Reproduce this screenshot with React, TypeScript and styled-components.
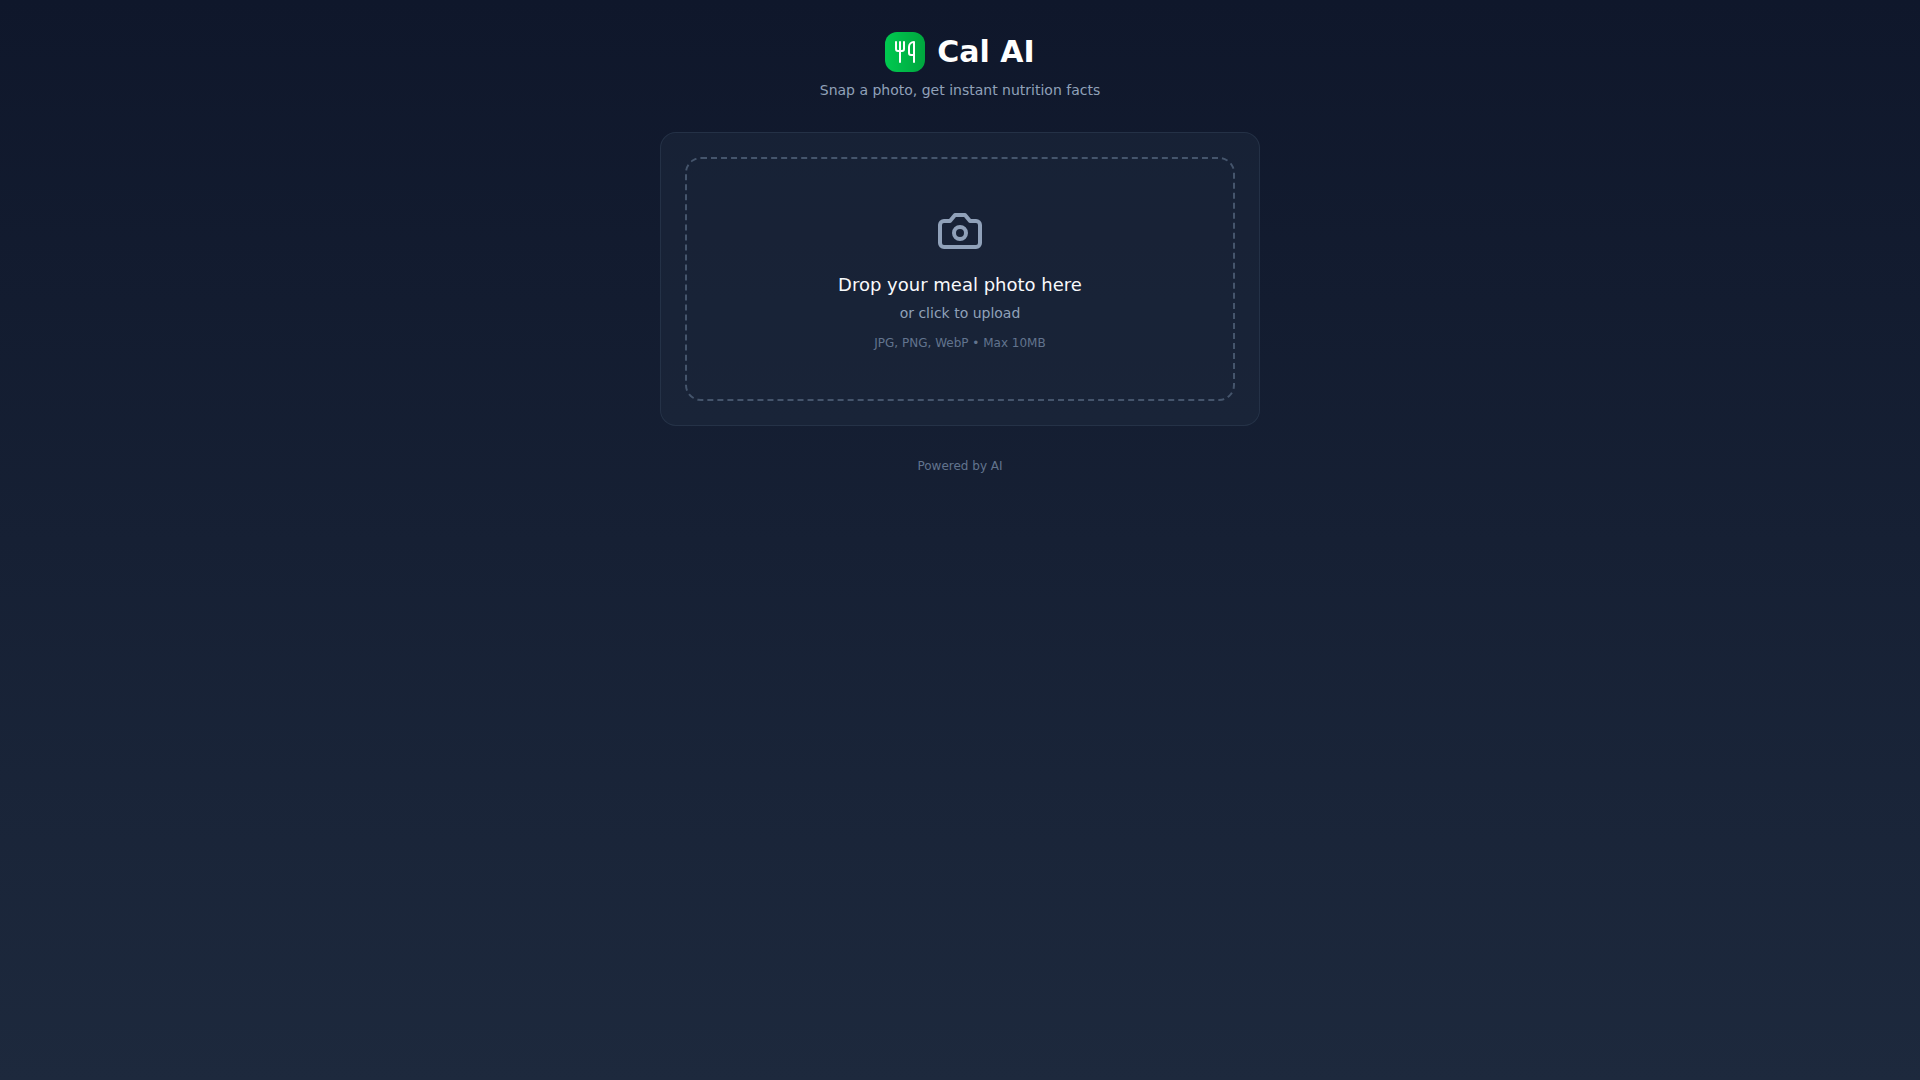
import React from "react";
import styled, { createGlobalStyle } from "styled-components";
import { Utensils } from "lucide-react";

const GlobalStyle = createGlobalStyle`
  *, *::before, *::after { box-sizing: border-box; }
  body {
    margin: 0;
    font-family: "DejaVu Sans", sans-serif;
    color: #ffffff;
  }
  h1, p { margin: 0; }
`;

const Page = styled.div`
  min-height: 100vh;
  background: linear-gradient(to bottom, #0f172b, #1d293d);
  padding: 32px 16px;
`;

const Column = styled.div`
  display: flex;
  flex-direction: column;
  gap: 32px;
  max-width: 600px;
  margin: 0 auto;
`;

const Header = styled.header`
  display: flex;
  flex-direction: column;
  align-items: center;
  gap: 8px;
`;

const Brand = styled.div`
  display: flex;
  align-items: center;
  gap: 12px;
`;

const Logo = styled.div`
  display: flex;
  align-items: center;
  justify-content: center;
  width: 40px;
  height: 40px;
  border-radius: 12px;
  background: linear-gradient(to right, #00c950, #00a63e);
`;

const Title = styled.h1`
  font-size: 30px;
  line-height: 36px;
  font-weight: 700;
`;

const Tagline = styled.p`
  font-size: 14px;
  line-height: 20px;
  color: #90a1b9;
`;

const Card = styled.main`
  padding: 24px;
  border: 1px solid rgba(49, 65, 88, 0.5);
  border-radius: 16px;
  background: rgba(29, 41, 61, 0.5);
`;

const DropZone = styled.label`
  display: flex;
  flex-direction: column;
  align-items: center;
  padding: 48px;
  border: 2px dashed #45556c;
  border-radius: 16px;
  color: #90a1b9;
  cursor: pointer;
`;

const FileInput = styled.input`
  display: none;
`;

const CameraSvg = styled.svg`
  width: 48px;
  height: 48px;
  fill: none;
  stroke: currentColor;
  stroke-width: 2;
  stroke-linecap: round;
  stroke-linejoin: round;
`;

const DropTitle = styled.span`
  margin: 16px 0 4px;
  font-size: 18px;
  line-height: 28px;
  color: #f8fafc;
`;

const DropHint = styled.span`
  font-size: 14px;
  line-height: 20px;
`;

const Note = styled.span`
  font-size: 12px;
  line-height: 16px;
  color: #62748e;
`;

const Formats = styled(Note)`
  margin-top: 12px;
`;

const Footer = styled.footer`
  display: flex;
  justify-content: center;
`;

function CameraIcon() {
  return (
    <CameraSvg viewBox="0 0 24 24" aria-hidden>
      <path d="M14.5 4h-5L7 7H4a2 2 0 0 0-2 2v9a2 2 0 0 0 2 2h16a2 2 0 0 0 2-2V9a2 2 0 0 0-2-2h-3l-2.5-3z" />
      <circle cx="12" cy="13" r="3" />
    </CameraSvg>
  );
}

export default function App() {
  return (
    <>
      <GlobalStyle />
      <Page>
        <Column>
          <Header>
            <Brand>
              <Logo>
                <Utensils size={24} color="#ffffff" aria-hidden />
              </Logo>
              <Title>Cal AI</Title>
            </Brand>
            <Tagline>Snap a photo, get instant nutrition facts</Tagline>
          </Header>
          <Card>
            <DropZone>
              <FileInput type="file" accept="image/jpeg,image/png,image/webp" />
              <CameraIcon />
              <DropTitle>Drop your meal photo here</DropTitle>
              <DropHint>or click to upload</DropHint>
              <Formats>JPG, PNG, WebP • Max 10MB</Formats>
            </DropZone>
          </Card>
          <Footer>
            <Note>Powered by AI</Note>
          </Footer>
        </Column>
      </Page>
    </>
  );
}
